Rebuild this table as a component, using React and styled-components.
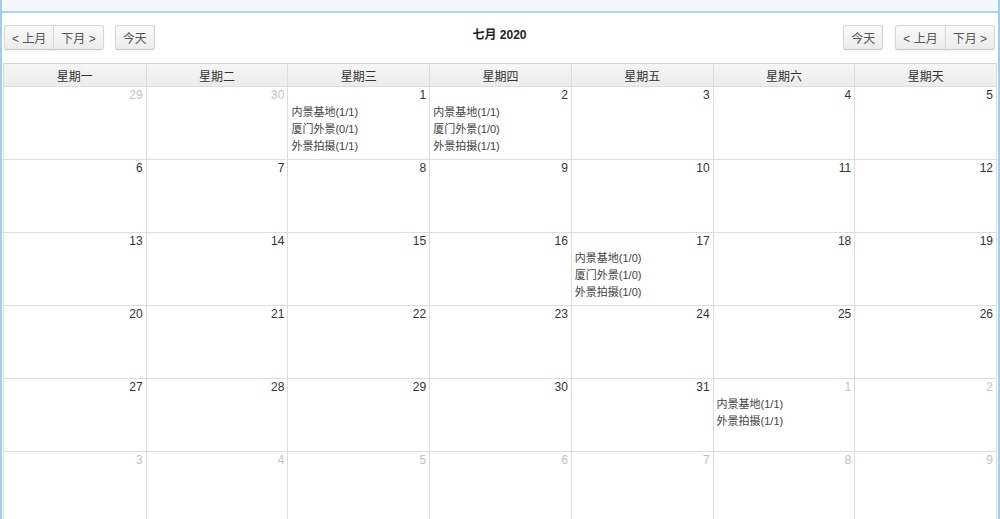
import React from 'react';
import styled, { createGlobalStyle } from 'styled-components';

const GlobalStyle = createGlobalStyle`
  html, body {
    margin: 0;
    padding: 0;
    background: #fff;
  }
  body {
    font-family: "Liberation Sans", "Noto Sans CJK SC", sans-serif;
    color: #333;
  }
`;

const WEEKDAYS = ['星期一', '星期二', '星期三', '星期四', '星期五', '星期六', '星期天'];

const EVENTS = {
  '7-1': ['内景基地(1/1)', '厦门外景(0/1)', '外景拍摄(1/1)'],
  '7-2': ['内景基地(1/1)', '厦门外景(1/0)', '外景拍摄(1/1)'],
  '7-17': ['内景基地(1/0)', '厦门外景(1/0)', '外景拍摄(1/0)'],
  '8-1': ['内景基地(1/1)', '外景拍摄(1/1)'],
};

function buildWeeks() {
  const days = [];
  days.push({ d: 29, m: 6 }, { d: 30, m: 6 });
  for (let i = 1; i <= 31; i++) days.push({ d: i, m: 7 });
  for (let i = 1; days.length < 42; i++) days.push({ d: i, m: 8 });
  const weeks = [];
  for (let i = 0; i < 42; i += 7) weeks.push(days.slice(i, i + 7));
  return weeks;
}

export default function App() {
  const weeks = buildWeeks();

  return (
    <>
      <GlobalStyle />
      <Frame>
        <TopStrip />
        <Toolbar>
          <Side>
            <ButtonGroup>
              <Button $first>&lt; 上月</Button>
              <Button $last>下月 &gt;</Button>
            </ButtonGroup>
            <Button $single>今天</Button>
          </Side>
          <Title>七月 2020</Title>
          <Side $right>
            <Button $single>今天</Button>
            <ButtonGroup>
              <Button $first>&lt; 上月</Button>
              <Button $last>下月 &gt;</Button>
            </ButtonGroup>
          </Side>
        </Toolbar>
        <Calendar>
          <HeadRow>
            {WEEKDAYS.map((w) => (
              <HeadCell key={w}>{w}</HeadCell>
            ))}
          </HeadRow>
          {weeks.map((week, wi) => (
            <WeekRow key={wi}>
              {week.map((day) => {
                const events = EVENTS[`${day.m}-${day.d}`] || [];
                return (
                  <DayCell key={`${day.m}-${day.d}`}>
                    <DayNumber $other={day.m !== 7}>{day.d}</DayNumber>
                    <EventList>
                      {events.map((e) => (
                        <EventItem key={e}>{e}</EventItem>
                      ))}
                    </EventList>
                  </DayCell>
                );
              })}
            </WeekRow>
          ))}
        </Calendar>
      </Frame>
    </>
  );
}

const Frame = styled.div`
  width: 1000px;
  height: 519px;
  box-sizing: border-box;
  border-left: 2px solid #9fcfec;
  border-right: 2px solid #9fcfec;
  overflow: hidden;
  background: #fff;
`;

const TopStrip = styled.div`
  height: 11px;
  background: #f4f8fb;
  border-bottom: 2px solid #a9d6f0;
`;

const Toolbar = styled.div`
  display: flex;
  justify-content: space-between;
  align-items: flex-start;
  height: 50px;
  padding: 0 3px 0 2px;
  box-sizing: border-box;
`;

const Side = styled.div`
  display: flex;
  gap: ${(p) => (p.$right ? '12px' : '11px')};
  margin-top: 12px;
  width: 300px;
  justify-content: ${(p) => (p.$right ? 'flex-end' : 'flex-start')};
`;

const ButtonGroup = styled.div`
  display: flex;
`;

const Button = styled.div`
  height: 25px;
  box-sizing: border-box;
  padding: 0 7px;
  display: flex;
  align-items: center;
  font-size: 12px;
  color: #555;
  background: linear-gradient(#fafafa, #ececec);
  border: 1px solid #d6d6d6;
  border-bottom-color: #c8c8c8;
  box-shadow: inset 0 1px 0 rgba(255, 255, 255, 0.6), 0 1px 2px rgba(0, 0, 0, 0.06);
  border-radius: ${(p) =>
    p.$single ? '3px' : p.$first ? '3px 0 0 3px' : '0 3px 3px 0'};
  margin-left: ${(p) => (p.$last ? '-1px' : '0')};
`;

const Title = styled.h2`
  margin: 12px 0 0;
  font-size: 12px;
  font-weight: bold;
  color: #222;
`;

const Calendar = styled.div`
  margin-left: 1px;
  width: 994px;
  border-left: 1px solid #ddd;
  border-right: 1px solid #ddd;
  box-sizing: border-box;
`;

const HeadRow = styled.div`
  display: grid;
  grid-template-columns: repeat(7, 1fr);
  height: 24px;
  background: linear-gradient(#f6f6f6, #ececec);
  border-top: 1px solid #d4d4d4;
  border-bottom: 1px solid #ddd;
  box-sizing: border-box;
`;

const HeadCell = styled.div`
  display: flex;
  align-items: center;
  justify-content: center;
  font-size: 12px;
  color: #333;
  border-left: 1px solid #ddd;
  &:first-child {
    border-left: none;
  }
`;

const WeekRow = styled.div`
  display: grid;
  grid-template-columns: repeat(7, 1fr);
  height: 73px;
  border-bottom: 1px solid #ddd;
  box-sizing: border-box;
`;

const DayCell = styled.div`
  border-left: 1px solid #ddd;
  padding: 1px 3px 0 3px;
  display: flex;
  flex-direction: column;
  &:first-child {
    border-left: none;
  }
`;

const DayNumber = styled.div`
  text-align: right;
  font-size: 12px;
  line-height: 14px;
  color: ${(p) => (p.$other ? '#c2c2c2' : '#333')};
`;

const EventList = styled.div`
  margin-top: 2px;
  display: flex;
  flex-direction: column;
`;

const EventItem = styled.div`
  font-size: 11px;
  line-height: 17px;
  color: #444;
`;
